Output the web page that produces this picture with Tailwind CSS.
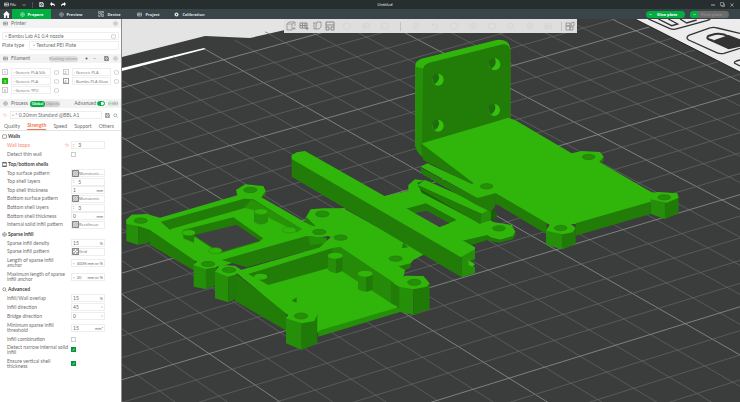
<!DOCTYPE html>
<html lang="en">
<head>
    <meta charset="UTF-8" />
    <meta name="viewport" content="width=device-width, initial-scale=1.0" />
    <title>Untitled</title>
    <script src="https://cdn.jsdelivr.net/npm/@tailwindcss/browser@4"></script>
</head>

<body class="h-screen flex flex-col overflow-hidden bg-white font-['Open_Sans',sans-serif] text-[4px] leading-[5px] text-[#6e6e6e]">

<!-- Icons -->
<svg class="hidden">
    <symbol id="i-gear" viewBox="0 0 10 10"><path d="M5 1 8.5 3v4L5 9 1.5 7V3z" fill="none" stroke="currentColor" /><circle cx="5" cy="5" r="1.4" fill="none" stroke="currentColor" /></symbol>
    <symbol id="i-box" viewBox="0 0 10 10"><rect x="1" y="1.5" width="8" height="7" rx="1.5" fill="none" stroke="currentColor" /></symbol>
    <symbol id="i-lines" viewBox="0 0 10 10"><path d="M1 2h8v6H1zM1 5h8M4 2v6" fill="none" stroke="currentColor" /></symbol>
    <symbol id="i-shell" viewBox="0 0 10 10"><path d="M1 1.500h8v7H1z" fill="none" stroke="currentColor" /><path d="M1 1.500h8M1 8.500h8" stroke="currentColor" stroke-width="2" /></symbol>
    <symbol id="i-hatch" viewBox="0 0 10 10"><path d="M.7.7h8.6v8.6H.7z" fill="#d6d6d6" stroke="#555" /><path d="M.7 4 4 .7M.7 7.5 7.5.7M2.5 9.3 9.3 2.5M6 9.3 9.3 6" fill="none" stroke="#999" stroke-width=".7" /></symbol>
    <symbol id="i-grid" viewBox="0 0 10 10"><path d="M.7.7h8.6v8.6H.7z" fill="#fff" stroke="#555" /><path d="m.7.7 8.6 8.6M9.3.7.7 9.3M5 .7 9.3 5 5 9.3.7 5z" fill="none" stroke="#777" stroke-width=".8" /></symbol>
    <symbol id="i-save" viewBox="0 0 10 10"><path d="M1 1h6.5L9 2.5V9H1zM3 1v3h4V1M3 9V6h4v3" fill="none" stroke="currentColor" stroke-width="1.2" /></symbol>
    <symbol id="i-undo" viewBox="0 0 10 10"><path d="M4 0v2.5c4 0 6 2 6 6-1.500-2-3-2.500-6-2.500v2.500L0 4.200z" fill="currentColor" /></symbol>
    <symbol id="i-reset" viewBox="0 0 10 10"><path d="M3 1 1 3.500 3 6M1 3.500h5a2.500 2.500 0 0 1 0 5H3" fill="none" stroke="currentColor" /></symbol>
    <symbol id="i-search" viewBox="0 0 10 10"><circle cx="4.500" cy="4.500" r="3" fill="none" stroke="currentColor" /><path d="m7 7 2.500 2.500" stroke="currentColor" /></symbol>
</svg>

<!-- Title Bar -->
<header class="shrink-0 text-white">
    <div class="h-[9px] grid grid-cols-3 items-center bg-[#262e30] px-1">
        <div class="flex items-center gap-1">
            <button class="flex items-center gap-px"><svg class="size-[5px]"><use href="#i-lines" /></svg>File</button>
            <button aria-label="File menu" class="w-[8px]"><svg class="size-[4px] mx-auto" viewBox="0 0 10 10"><path d="m1 3 4 4 4-4" fill="none" stroke="#ccc" stroke-width="1.500" /></svg></button>
            <span class="w-px h-[6px] bg-[#4a5254]"></span>
            <button aria-label="Save" class="ml-[2px]"><svg class="size-[5px]"><use href="#i-save" /></svg></button>
            <button aria-label="Undo" class="ml-[2px]"><svg class="size-[5px]"><use href="#i-undo" /></svg></button>
            <button aria-label="Redo" class="ml-[2px] -scale-x-100"><svg class="size-[5px]"><use href="#i-undo" /></svg></button>
        </div>
        <h1 class="text-center pl-[30px]">Untitled</h1>
        <div class="flex justify-end items-center gap-[5px] pr-[2px]">
            <button aria-label="Minimize"><svg class="size-[4px]" viewBox="0 0 10 10"><path d="M0 5h10" stroke="#ccc" stroke-width="2" /></svg></button>
            <button aria-label="Restore"><svg class="size-[5px]" viewBox="0 0 10 10"><path d="M1 1h6v6H1zM3.500 7v2H9V3.500H7" fill="none" stroke="#ccc" /></svg></button>
            <button aria-label="Close"><svg class="size-[4px]" viewBox="0 0 10 10"><path d="m1 1 8 8M9 1 1 9" stroke="#ccc" stroke-width="1.500" /></svg></button>
        </div>
    </div>
    <nav class="h-[10px] flex items-stretch bg-[#3a4549] font-bold text-[#dfe2e3]">
        <button aria-label="Home" class="w-[12px] flex items-center justify-center"><svg class="size-[7px]" viewBox="0 0 10 10"><path d="M5 0 0 5h1.500v5H4V6.500h2V10h2.500V5H10z" fill="#fff" /></svg></button>
        <button class="w-[39px] flex items-center justify-center gap-[3px] bg-[#00ae42] text-white"><svg class="size-[5px]"><use href="#i-gear" /></svg>Prepare</button>
        <button class="w-[39px] flex items-center justify-center gap-[3px]"><svg class="size-[5px]"><use href="#i-gear" /></svg>Preview</button>
        <button class="w-[39px] flex items-center justify-center gap-[3px]"><svg class="size-[6px]" viewBox="0 0 10 10"><path d="M1 1h3v3H1zM6 6h3v3H6zM5 1h4v3M1 6v3h3M8 1 3 8" fill="none" stroke="currentColor" /></svg>Device</button>
        <button class="w-[39px] flex items-center justify-center gap-[3px]"><svg class="size-[5px]"><use href="#i-lines" /></svg>Project</button>
        <button class="w-[43px] flex items-center justify-center gap-[3px]"><svg class="size-[5px]" viewBox="0 0 10 10"><circle cx="5" cy="5" r="4" fill="currentColor" /><circle cx="5" cy="5" r="1.300" fill="#3a4549" /></svg>Calibration</button>
        <div class="ml-auto mr-[11px] flex items-center gap-[5px]">
            <button class="w-[39px] h-[7px] rounded-full bg-[#00ae42] text-white flex items-center pl-[3px]"><svg class="size-[3px] mr-[5px]" viewBox="0 0 10 10"><path d="m1 3 4 4 4-4" fill="none" stroke="#fff" stroke-width="2" /></svg>Slice plate</button>
            <button class="w-[39px] h-[7px] rounded-full bg-[#6b6b6b] text-[#8d8d8d] flex items-center overflow-hidden"><span class="w-[8px] h-[7px] bg-[#00ae42] flex items-center justify-center mr-[3px]"><svg class="size-[3px]" viewBox="0 0 10 10"><path d="m1 3 4 4 4-4" fill="none" stroke="#fff" stroke-width="2" /></svg></span>Print plate</button>
        </div>
    </nav>
</header>

<div class="flex-1 min-h-0 flex">
<!-- Settings Panel -->
<aside class="w-[122px] shrink-0 overflow-hidden border-r border-[#8c8c8c] bg-white font-[Lato,sans-serif] text-[5px]">
    <!-- Printer -->
    <div class="h-[9px] flex items-center gap-[3px] px-[3px] bg-[#f3f3f3]">
        <svg class="size-[5px]"><use href="#i-lines" /></svg>
        <h2 class="flex-1">Printer</h2>
        <svg class="size-[5px] text-[#999]"><use href="#i-gear" /></svg>
    </div>
    <div class="px-[2px] pt-[4px] pb-[4px] flex flex-col gap-px">
        <div class="h-[8px] flex items-center border border-[#eee] rounded-[1px] pr-[2px]">
            <select aria-label="Printer" class="flex-1 appearance-none pl-[2px]"><option>◦ Bambu Lab A1 0.4 nozzle</option></select>
            <svg class="size-[5px] text-[#aaa]"><use href="#i-box" /></svg>
        </div>
        <label class="h-[9px] flex items-center">
            <span class="w-[27px]">Plate type</span>
            <select class="flex-1 h-[9px] appearance-none border border-[#eee] rounded-[1px] pl-[3px]"><option>◦ Textured PEI Plate</option></select>
        </label>
    </div>

    <!-- Filament -->
    <div class="h-[9px] flex items-center gap-[3px] px-[3px] bg-[#f3f3f3]">
        <svg class="size-[5px]"><use href="#i-lines" /></svg>
        <h2 class="flex-1">Filament</h2>
        <button class="w-[29px] h-[6px] mr-[3px] rounded-full bg-[#dedede] text-[#999] text-[4px] whitespace-nowrap flex items-center justify-center">Flushing volume</button>
        <button aria-label="Add filament" class="w-[5px] font-bold text-[#444]">+</button>
        <button aria-label="Remove filament" class="w-[5px] mr-[4px]">−</button>
        <svg class="size-[5px] text-[#555]"><use href="#i-save" /></svg>
        <svg class="size-[5px] ml-px text-[#999]"><use href="#i-gear" /></svg>
    </div>
    <div class="grid grid-cols-2 gap-x-[4px] gap-y-px px-[2px] pt-[5px] pb-[5px] font-['Open_Sans',sans-serif] text-[4px]">
        <div class="h-[8px] flex items-center gap-[3px]"><span class="size-[6px] border border-[#ccc] flex items-center justify-center">1</span><select aria-label="Filament 1" class="flex-1 min-w-0 h-[8px] appearance-none border border-[#eee] pl-px"><option>◦ Generic PLA Silk</option></select><svg class="size-[5px] text-[#aaa]"><use href="#i-box" /></svg></div>
        <div class="h-[8px] flex items-center gap-[3px]"><span class="size-[6px] border border-[#ccc] flex items-center justify-center">2</span><select aria-label="Filament 2" class="flex-1 min-w-0 h-[8px] appearance-none border border-[#eee] pl-px"><option>◦ Generic PLA</option></select><svg class="size-[5px] text-[#aaa]"><use href="#i-box" /></svg></div>
        <div class="h-[8px] flex items-center gap-[3px]"><span class="size-[6px] bg-[#1fb80a] text-white flex items-center justify-center">3</span><select aria-label="Filament 3" class="flex-1 min-w-0 h-[8px] appearance-none border border-[#eee] pl-px"><option>◦ Generic PLA</option></select><svg class="size-[5px] text-[#aaa]"><use href="#i-box" /></svg></div>
        <div class="h-[8px] flex items-center gap-[3px]"><span class="size-[6px] border border-[#999] flex items-center justify-center">4</span><select aria-label="Filament 4" class="flex-1 min-w-0 h-[8px] appearance-none border border-[#eee] pl-px"><option>◦ Bambu PLA Glow</option></select><svg class="size-[5px] text-[#aaa]"><use href="#i-box" /></svg></div>
        <div class="h-[8px] flex items-center gap-[3px]"><span class="size-[6px] border border-[#ccc] flex items-center justify-center">5</span><select aria-label="Filament 5" class="flex-1 min-w-0 h-[8px] appearance-none border border-[#eee] pl-px"><option>◦ Generic TPU</option></select><svg class="size-[5px] text-[#aaa]"><use href="#i-box" /></svg></div>
    </div>

    <!-- Process -->
    <div class="h-[9px] flex items-center px-[3px] bg-[#f3f3f3]">
        <svg class="size-[5px] mr-[3px]"><use href="#i-gear" /></svg>
        <h2 class="w-[19px]">Process</h2>
        <div class="h-[6px] flex items-center rounded-full bg-[#d4d4d4] text-[4px]">
            <button class="w-[15px] h-[6px] rounded-full bg-[#00ae42] text-white font-bold">Global</button>
            <button class="w-[15px] h-[6px] text-[#999]">Objects</button>
        </div>
        <label class="ml-auto flex items-center gap-px">Advanced
            <input type="checkbox" checked class="appearance-none w-[8px] h-[5px] rounded-full border border-[#00ae42] bg-linear-to-r from-[#00ae42] from-50% to-white to-50%" />
        </label>
        <svg class="size-[5px] ml-[3px] text-[#7cc99a]"><use href="#i-lines" /></svg>
        <svg class="size-[5px] text-[#999]"><use href="#i-lines" /></svg>
    </div>
    <div class="h-[14px] flex items-center gap-[3px] px-[3px]">
        <svg class="size-[4px] text-[#f7a27c]"><use href="#i-reset" /></svg>
        <select aria-label="Process preset" class="flex-1 h-[8px] appearance-none border border-[#eee] pl-px"><option>◦ * 0.20mm Standard @BBL A1</option></select>
        <svg class="size-[5px]"><use href="#i-save" /></svg>
        <svg class="size-[5px]"><use href="#i-search" /></svg>
    </div>
    <div class="h-[9px] flex justify-between items-stretch px-[4px] pr-[7px] border-b border-[#e4e4e4]">
        <button>Quality</button>
        <button class="font-bold text-[#f5764a] border-b border-[#f5764a]">Strength</button>
        <button>Speed</button>
        <button>Support</button>
        <button>Others</button>
    </div>

    <!-- Walls -->
    <h3 class="h-[9px] mt-px flex items-center gap-px px-[2px] font-bold text-[#444]"><svg class="size-[5px]"><use href="#i-box" /></svg>Walls</h3>
    <div class="h-[18px] flex flex-col justify-between pl-[7px] pr-[16px]">
        <label class="flex items-center text-[#f5876a]"><span class="w-[58px]">Wall loops</span><svg class="size-[4px] mr-[2px]"><use href="#i-reset" /></svg><span class="w-[34px] h-[8px] border border-[#eee] flex items-center pl-px text-[#666]">:<input value="3" class="w-full ml-[4px]" /></span></label>
        <label class="h-[9px] flex items-center"><span class="w-[64px]">Detect thin wall</span><input type="checkbox" class="appearance-none size-[5px] border border-[#ccc]" /></label>
    </div>

    <!-- Top/bottom shells -->
    <h3 class="h-[9px] mt-px flex items-center gap-px px-[2px] font-bold text-[#444]"><svg class="size-[5px]"><use href="#i-shell" /></svg>Top/bottom shells</h3>
    <div class="h-[60px] flex flex-col justify-between pl-[7px] pr-[16px]">
        <label class="flex items-center"><span class="w-[64px]">Top surface pattern</span><span class="w-[34px] h-[8px] border border-[#eee] flex items-center"><svg class="size-[7px] shrink-0"><use href="#i-hatch" /></svg><select class="w-full min-w-0 appearance-none font-['Open_Sans',sans-serif] text-[4px]"><option>Monotonic ...</option></select></span></label>
        <label class="flex items-center"><span class="w-[64px]">Top shell layers</span><span class="w-[34px] h-[8px] border border-[#eee] flex items-center pl-px">:<input value="5" class="w-full ml-[4px]" /></span></label>
        <label class="flex items-center"><span class="w-[64px]">Top shell thickness</span><span class="w-[34px] h-[8px] border border-[#eee] flex items-center px-px"><input value="1" class="w-full" /><span class="text-[4px]">mm</span></span></label>
        <label class="flex items-center"><span class="w-[64px]">Bottom surface pattern</span><span class="w-[34px] h-[8px] border border-[#eee] flex items-center"><svg class="size-[7px] shrink-0"><use href="#i-hatch" /></svg><select class="w-full min-w-0 appearance-none font-['Open_Sans',sans-serif] text-[4px]"><option>Monotonic</option></select></span></label>
        <label class="flex items-center"><span class="w-[64px]">Bottom shell layers</span><span class="w-[34px] h-[8px] border border-[#eee] flex items-center pl-px">:<input value="3" class="w-full ml-[4px]" /></span></label>
        <label class="flex items-center"><span class="w-[64px]">Bottom shell thickness</span><span class="w-[34px] h-[8px] border border-[#eee] flex items-center px-px"><input value="0" class="w-full" /><span class="text-[4px]">mm</span></span></label>
        <label class="flex items-center"><span class="w-[64px]">Internal solid infill pattern</span><span class="w-[34px] h-[8px] border border-[#eee] flex items-center"><svg class="size-[7px] shrink-0"><use href="#i-hatch" /></svg><select class="w-full min-w-0 appearance-none font-['Open_Sans',sans-serif] text-[4px]"><option>Rectilinear</option></select></span></label>
    </div>

    <!-- Sparse infill -->
    <h3 class="h-[9px] mt-px flex items-center gap-px px-[2px] font-bold text-[#444]"><svg class="size-[5px]"><use href="#i-gear" /></svg>Sparse infill</h3>
    <div class="h-[45px] flex flex-col justify-between pl-[7px] pr-[16px]">
        <label class="flex items-center"><span class="w-[64px]">Sparse infill density</span><span class="w-[34px] h-[8px] border border-[#eee] flex items-center px-px"><input value="15" class="w-full" /><span class="text-[4px]">%</span></span></label>
        <label class="flex items-center"><span class="w-[64px]">Sparse infill pattern</span><span class="w-[34px] h-[8px] border border-[#eee] flex items-center"><svg class="size-[7px] shrink-0"><use href="#i-grid" /></svg><select class="w-full min-w-0 appearance-none font-['Open_Sans',sans-serif] text-[4px]"><option>Grid</option></select></span></label>
        <label class="h-[14px] flex items-center"><span class="w-[64px]">Length of sparse infill<br />anchor</span><span class="w-[34px] h-[8px] border border-[#eee] flex items-center px-px text-[4px]">◦<input value="400%" class="w-full min-w-0 ml-[2px]" /><span class="whitespace-nowrap">mm or %</span></span></label>
        <label class="h-[13px] flex items-center"><span class="w-[64px]">Maximum length of sparse<br />infill anchor</span><span class="w-[34px] h-[8px] border border-[#eee] flex items-center px-px text-[4px]">◦<input value="20" class="w-full min-w-0 ml-[2px]" /><span class="whitespace-nowrap">mm or %</span></span></label>
    </div>

    <!-- Advanced -->
    <h3 class="h-[9px] mt-px flex items-center gap-px px-[2px] font-bold text-[#444]"><svg class="size-[5px]"><use href="#i-search" /></svg>Advanced</h3>
    <div class="h-[76px] flex flex-col justify-between pl-[7px] pr-[16px]">
        <label class="flex items-center"><span class="w-[64px]">Infill/Wall overlap</span><span class="w-[34px] h-[8px] border border-[#eee] flex items-center px-px"><input value="15" class="w-full" /><span class="text-[4px]">%</span></span></label>
        <label class="flex items-center"><span class="w-[64px]">Infill direction</span><span class="w-[34px] h-[8px] border border-[#eee] flex items-center px-px"><input value="45" class="w-full" /><span class="text-[4px]">°</span></span></label>
        <label class="flex items-center"><span class="w-[64px]">Bridge direction</span><span class="w-[34px] h-[8px] border border-[#eee] flex items-center px-px"><input value="0" class="w-full" /><span class="text-[4px]">°</span></span></label>
        <label class="h-[14px] flex items-center"><span class="w-[64px]">Minimum sparse infill<br />threshold</span><span class="w-[34px] h-[8px] border border-[#eee] flex items-center px-px"><input value="15" class="w-full" /><span class="text-[4px]">mm²</span></span></label>
        <label class="flex items-center"><span class="w-[64px]">Infill combination</span><input type="checkbox" class="appearance-none size-[5px] border border-[#ccc]" /></label>
        <label class="h-[14px] flex items-center"><span class="w-[64px]">Detect narrow internal solid<br />infill</span><input type="checkbox" checked class="appearance-none size-[5px] bg-[#00963a] flex items-center justify-center text-[4px] text-white after:content-['✓']" /></label>
        <label class="h-[12px] flex items-center"><span class="w-[64px]">Ensure vertical shell<br />thickness</span><input type="checkbox" checked class="appearance-none size-[5px] bg-[#00963a] flex items-center justify-center text-[4px] text-white after:content-['✓']" /></label>
    </div>
</aside>

<!-- 3D View -->
<main class="relative flex-1 min-w-0 bg-[#e4e4e4]">
    <svg class="absolute inset-0 w-full h-full" viewBox="122 19 618 383" preserveAspectRatio="xMinYMin slice">
        <path d="M122 57 205 36 250 38 285 30 320 19H740V402H122z" fill="#3b3c3c" />
        <path d="M122 68 204 48l2 1-84 22z" fill="#fff" />
        <g id="bed-grid"></g>

        <!-- Plate corner with printed symbols -->
        <path d="M635 19H740V72z" fill="#ececec" />
        <path d="M635 19 740 72" stroke="#222" fill="none" />
        <g transform="translate(580 0) scale(.3333)" fill="none" stroke="#333" stroke-width="4">
            <path d="M205 57 270 86Q280 90 292 86L380 62Q390 60 392 54M235 57l40 20 18-5-28-15M300 57l20 12 30-9" />
            <path d="M326 106 390 84Q400 80 412 84L480 100M326 106Q316 113 326 120L410 158Q420 163 432 160L480 145" />
            <path d="M400 122Q375 118 385 108L405 102Q428 98 446 110" stroke-width="6" />
            <path d="m398 124 48-17 34 13v18l-34 8z" fill="#333" />
            <path d="M480 180Q460 184 464 190L480 198" />
        </g>

        <!-- Centre frame -->
        <g transform="translate(280 140) scale(.3333)">
            <path d="M545 303 620 283 628 290 660 300 706 275V286L698 298 660 308 632 304 622 300 575 315z" fill="#207a07" />
            <path d="M300 172 385 152 385 135 405 118 450 124 640 246 695 255 706 275 698 288 660 299 632 292 622 285 545 303 585 325 400 330z" fill="#30b60b" />
            <path d="M375 207 438 190 530 240 478 262z" fill="#207a07" />
            <path d="M402 220 440 212 508 250 478 261z" fill="#3f4040" />
            <ellipse cx="657" cy="265" rx="19" ry="8" fill="#268f09" stroke="#207a07" stroke-width="2" />
            <path d="M412 128 425 158 600 250 650 235V215L440 120z" fill="#1a5f06" />
            <path d="M412 135 435 120 635 208 605 222z" fill="#30b60b" />
            <path d="M412 135 605 222 600 252 422 148z" fill="#227c08" />
            <path d="M605 222 633 205V238L600 252z" fill="#268f09" />
        </g>

        <!-- Bracket -->
        <g transform="translate(400 30) scale(.3333)">
            <path d="M46 350 46 105Q48 92 64 86L290 30Q326 26 331 55V264L66 345z" fill="#30b60b" />
            <path d="M46 110 68 115V345L85 390Q46 375 46 340z" fill="#268f09" />
            <path d="M68 122Q70 103 88 98L308 43Q328 42 331 60V264L320 266 66 340z" fill="#227c08" />
            <g>
                <ellipse cx="114" cy="149" rx="17" ry="18" fill="#34c00d" /><path d="M97 140Q102 130 114 131 124 148 104 163 96 156 97 140z" fill="#1f6d10" />
                <ellipse cx="284" cy="103" rx="17" ry="18" fill="#34c00d" /><path d="M267 94Q272 84 284 85 294 102 274 117 266 110 267 94z" fill="#1f6d10" />
                <ellipse cx="283" cy="240" rx="17" ry="18" fill="#34c00d" /><path d="M266 231Q271 221 283 222 293 239 273 254 265 247 266 231z" fill="#1f6d10" />
                <ellipse cx="114" cy="287" rx="17" ry="18" fill="#34c00d" /><path d="M97 278Q102 268 114 269 124 286 104 301 96 294 97 278z" fill="#1f6d10" />
            </g>
            <path d="M62 342 70 390 240 478 285 520 440 613V575L285 480 75 345z" fill="#227c08" />
            <path d="M605 380 611 380V392L600 400z" fill="#227c08" />
            <path d="M66 342 325 263 345 270 515 370 545 363 600 366 611 380 598 396 755 487 830 490 750 518 527 582 450 585 285 488 235 470z" fill="#30b60b" />
            <path d="M527 580 752 515V552L527 617z" fill="#227c08" />
            <path d="M752 505V552L795 567V517z" fill="#268f09" />
            <path d="M795 517V567L836 550V500z" fill="#207a07" />
            <path d="M752 508 770 486 832 490 836 503 800 518z" fill="#30b60b" />
            <path d="M438 600V645L488 658V610z" fill="#268f09" />
            <path d="M488 610V658L527 642V593z" fill="#207a07" />
            <path d="M438 602 450 583 505 577 527 593 518 607 488 613z" fill="#30b60b" />
            <path d="M62 413 232 503 285 487V530L272 545 230 525 62 430z" fill="#227c08" />
            <path d="M62 410 82 400 215 462 240 454 285 462 300 486 232 504z" fill="#30b60b" />
            <g fill="#268f09" stroke="#207a07" stroke-width="2">
                <ellipse cx="260" cy="469" rx="19" ry="8" /><ellipse cx="566" cy="381" rx="19" ry="8" />
                <ellipse cx="793" cy="502" rx="19" ry="8" /><ellipse cx="482" cy="594" rx="19" ry="8" />
            </g>
        </g>

        <!-- Low plate and rail -->
        <g transform="translate(280 140) scale(.3333)">
            <path d="M320 370 392 365V382L365 397 325 385z" fill="#207a07" />
            <path d="M76 235 92 208 130 205 190 205 380 310 412 328 438 340 400 360 392 370 350 380 320 378 150 290 80 260z" fill="#30b60b" />
            <path d="M76 235V250L110 262 80 232zM210 300 350 385 320 378 230 325zM365 325 370 308 385 322z" fill="#227c08" />
            <path d="M35 48 545 345V412L35 110z" fill="#227c08" />
            <path d="M35 45 50 37 75 33 585 322V330L548 352 540 350 35 57z" fill="#30b60b" />
            <path d="M545 350 585 328V358L565 363V375L585 380V400L545 412z" fill="#268f09" />
            <path d="M565 360V375L578 380 585 372z" fill="#34c00d" />
            <g fill="#268f09" stroke="#207a07" stroke-width="2"><ellipse cx="127" cy="222" rx="20" ry="9" /><ellipse cx="347" cy="356" rx="20" ry="8" /></g>
        </g>

        <!-- Left frames -->
        <g transform="translate(120 130) scale(.3333)">
            <path d="M80 290 225 385V423L90 345z" fill="#227c08" />
            <path d="M19 272V333L55 345V285z" fill="#268f09" /><path d="M55 285V345L92 337V290z" fill="#207a07" />
            <path d="M425 185 437 182V195L420 205z" fill="#227c08" />
            <path d="M18 270 35 254 80 252 120 263 352 196 348 180 375 163 430 168 437 182 424 202 575 288 630 290 640 315 560 330 300 410 225 392 90 300 55 288 20 282z" fill="#30b60b" />
            <path d="M122 275 372 206 400 208 545 297 520 312 375 235 150 300z" fill="#227c08" />
            <path d="M395 208 545 297 530 305 372 235z" fill="#279309" />
            <path d="M150 298 375 234 400 240 530 305 515 318 430 335 300 372 220 325 190 318z" fill="#30b60b" />
            <path d="M188 300 340 262 430 325 418 335 300 370z" fill="#227c08" />
            <path d="M222 316 350 284 420 332 300 367z" fill="#3f4040" />
            <path d="M225 320 270 352 300 360 290 382 235 350z" fill="#30b60b" />
            <path d="M190 308V325L222 338V308z" fill="#227c08" /><path d="M402 245V275Q422 292 444 275V245z" fill="#268f09" />
            <g fill="#30b60b" stroke="#268f09" stroke-width="2"><ellipse cx="206" cy="308" rx="20" ry="9" /><ellipse cx="423" cy="245" rx="20" ry="9" /><ellipse cx="286" cy="362" rx="20" ry="9" /><ellipse cx="508" cy="300" rx="20" ry="9" /></g>
            <path d="M305 390 560 318 620 325 625 345 380 412z" fill="#227c08" />
            <path d="M565 318 620 323V340L570 345z" fill="#268f09" />
            <path d="M221 402V470L258 478V415z" fill="#268f09" /><path d="M258 415V478L290 465V408z" fill="#207a07" />
            <path d="M221 405 235 390 290 387 305 398 288 412 258 417z" fill="#30b60b" />

            <path d="M345 430 500 545V602L345 513z" fill="#227c08" />
            <path d="M345 425 380 415 600 352 632 322 660 312 700 320 720 340 855 420 830 540 600 612 500 552z" fill="#30b60b" />
            <path d="M385 432 635 355 648 360V408L445 465z" fill="#227c08" />
            <path d="M635 355 660 350 822 458V525L645 410z" fill="#258a08" />
            <path d="M595 602 840 530V546L595 620z" fill="#268f09" />
            <path d="M624 378V420Q646 438 668 420V378z" fill="#268f09" /><path d="M714 433V478Q736 492 758 478V433z" fill="#268f09" />
            <path d="M648 378V430Q662 428 668 420V378zM738 433V485Q752 484 758 478V433z" fill="#207a07" />
            <g fill="#30b60b"><ellipse cx="646" cy="377" rx="22" ry="9" /><ellipse cx="736" cy="431" rx="22" ry="9" /><ellipse cx="422" cy="440" rx="20" ry="9" /></g>
            <path d="M515 512 530 502V518z" fill="#207a07" />
            <path d="M285 425V505L325 517V437z" fill="#268f09" /><path d="M325 437V517L350 505V430z" fill="#207a07" />
            <path d="M285 425 300 405 345 407 365 420 345 434 325 440z" fill="#30b60b" />
            <path d="M813 455V520L842 535V468z" fill="#227c08" />
            <path d="M838 465V545L880 555V477z" fill="#268f09" /><path d="M880 477V555L929 538V460z" fill="#207a07" />
            <path d="M820 460 855 437 910 438 929 460 920 470 880 478 838 470z" fill="#30b60b" />
            <path d="M498 562V640L545 660V578z" fill="#268f09" /><path d="M545 578V660L592 640V553z" fill="#207a07" />
            <path d="M498 565 512 544 575 538 592 555 583 573 545 580z" fill="#30b60b" />
            <g fill="#268f09" stroke="#207a07" stroke-width="2">
                <ellipse cx="62" cy="272" rx="20" ry="8" /><ellipse cx="391" cy="180" rx="20" ry="8" /><ellipse cx="264" cy="402" rx="20" ry="8" />
                <ellipse cx="327" cy="420" rx="20" ry="8" /><ellipse cx="598" cy="306" rx="20" ry="8" /><ellipse cx="662" cy="323" rx="20" ry="8" />
                <ellipse cx="543" cy="558" rx="20" ry="9" /><ellipse cx="883" cy="457" rx="20" ry="9" />
            </g>
        </g>
    </svg>

    <!-- Toolbar -->
    <div class="absolute top-0 left-[162px] w-[293px] h-[14px] px-[2px] flex items-center gap-[3px] bg-[#dedede] text-[#8a8a8a]">
        <button aria-label="Add"><svg class="size-[10px]" viewBox="0 0 10 10"><path d="M1 3 3 1h6M1 3h5v6H1zM6 3l3-2v4M8 6v3M6.500 7.500h3" fill="none" stroke="currentColor" stroke-width=".7" /></svg></button>
        <button aria-label="Add plate"><svg class="size-[10px]" viewBox="0 0 10 10"><path d="M1 2h7v5H1zM1 4.500h7M3.500 2v5M6 2v5M8 6v3M6.500 7.500h3" fill="none" stroke="currentColor" /></svg></button>
        <button aria-label="Auto orient"><svg class="size-[10px]" viewBox="0 0 10 10"><path d="M1 2h3M2 2v6h2M5 1h4v5l-2 2H4V4z" fill="none" stroke="currentColor" stroke-width=".8" /></svg></button>
        <button aria-label="Arrange"><svg class="size-[10px]" viewBox="0 0 10 10"><path d="M1 1h8v3H1zM1 6h3v3H1zM6 6h3v3H6zM1 4v2M9 4v2" fill="none" stroke="currentColor" /></svg></button>
        <div class="flex-1 flex items-center justify-around text-[#d3d3d3]">
            <svg class="size-[8px]"><use href="#i-box" /></svg>
            <svg class="size-[8px]"><use href="#i-lines" /></svg>
            <svg class="size-[8px]"><use href="#i-box" /></svg>
            <span class="w-px h-[9px] bg-[#c2c2c2]"></span>
            <svg class="size-[8px]"><use href="#i-gear" /></svg>
            <svg class="size-[8px]"><use href="#i-reset" /></svg>
            <svg class="size-[8px]"><use href="#i-box" /></svg>
            <svg class="size-[8px]"><use href="#i-gear" /></svg>
            <svg class="size-[8px]"><use href="#i-box" /></svg>
            <svg class="size-[8px]"><use href="#i-search" /></svg>
            <svg class="size-[8px]"><use href="#i-gear" /></svg>
            <svg class="size-[8px]"><use href="#i-lines" /></svg>
        </div>
        <span class="w-px h-[9px] bg-[#c2c2c2]"></span>
        <button aria-label="Assembly view"><svg class="size-[10px]" viewBox="0 0 10 10"><path d="M1 2h4v3H1zM1 5h4v4H1zM5 6h3v3H5zM6 2l3-1v4H6z" fill="none" stroke="currentColor" stroke-width=".8" /></svg></button>
    </div>
</main>
</div>

<script>
    // Bed grid in perspective: u runs towards the left, v towards the viewer, 0.1 is one cell
    const grid = document.getElementById('bed-grid');

    function project(u, v) {
        const w = 1 - 0.0261 * u - 0.0734 * v;
        return [(483 - 322.3 * u + 186 * v) / w, (74 + 85.7 * u + 111.3 * v) / w];
    }

    function addLine(a, b, major) {
        const line = document.createElementNS('http://www.w3.org/2000/svg', 'line');
        line.setAttribute('x1', a[0]);
        line.setAttribute('y1', a[1]);
        line.setAttribute('x2', b[0]);
        line.setAttribute('y2', b[1]);
        line.setAttribute('stroke', major ? '#8f9090' : '#666767');
        line.setAttribute('stroke-width', major ? 0.8 : 0.7);
        grid.appendChild(line);
    }

    for (let i = -15; i <= 30; i++) {
        addLine(project(i / 10, -0.6), project(i / 10, 3), i % 5 === 0);
    }
    for (let j = -5; j <= 30; j++) {
        addLine(project(-1.5, j / 10), project(3, j / 10), j % 5 === 0);
    }
</script>
</body>
</html>
